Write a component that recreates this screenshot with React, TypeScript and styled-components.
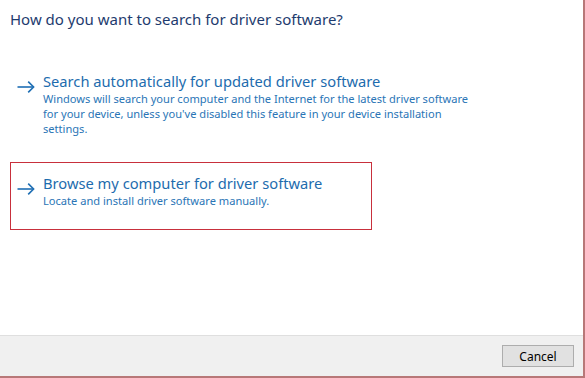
import styled, { createGlobalStyle } from 'styled-components'

const GlobalStyle = createGlobalStyle`
  html, body {
    margin: 0;
    padding: 0;
    background: #ffffff;
  }
  body {
    font-family: "Noto Sans", "Open Sans", sans-serif;
  }
`

const Window = styled.div`
  box-sizing: border-box;
  width: 585px;
  height: 378px;
  display: flex;
  flex-direction: column;
  background: #ffffff;
  border-right: 2px solid #b87878;
  border-bottom: 2px solid #b87878;
`

const Content = styled.div`
  flex: 1;
  padding: 8px 0 0 10px;
`

const Title = styled.h1`
  margin: 0 0 40px 0;
  font-size: 15px;
  font-weight: 400;
  line-height: 22px;
  color: #1e3b6e;
`

const LinkBox = styled.div<{ $highlighted?: boolean }>`
  box-sizing: border-box;
  width: ${(p) => (p.$highlighted ? '362px' : '466px')};
  display: grid;
  grid-template-columns: 26px 1fr;
  padding: ${(p) => (p.$highlighted ? '10px 0 21px 6px' : '0 0 0 6px')};
  margin-bottom: 25px;
  border: 1px solid ${(p) => (p.$highlighted ? '#c8303c' : 'transparent')};
  cursor: pointer;
`

const ArrowCell = styled.div`
  padding-top: 5px;
  color: #1f6fb4;
`

const LinkTitle = styled.div`
  font-size: 14.7px;
  line-height: 20px;
  color: #1d6cae;
`

const LinkNote = styled.div`
  font-size: 11.1px;
  line-height: 15px;
  color: #2a75b6;
`

const Footer = styled.div`
  height: 40px;
  display: flex;
  align-items: center;
  justify-content: flex-end;
  padding-right: 9px;
  background: #f0f0f0;
  border-top: 1px solid #dfdfdf;
`

const Button = styled.button`
  width: 72px;
  height: 22px;
  padding: 0;
  font-family: inherit;
  font-size: 12px;
  color: #000000;
  background: #e1e1e1;
  border: 1px solid #adadad;
`

function Arrow() {
  return (
    <svg width="18" height="12" viewBox="0 0 18 12" fill="none">
      <path d="M0.5 6 H16.6" stroke="currentColor" strokeWidth="1.6" />
      <path d="M11.2 0.6 L16.6 6 L11.2 11.4" stroke="currentColor" strokeWidth="1.6" />
    </svg>
  )
}

interface CommandLinkProps {
  title: string
  note: string
  highlighted?: boolean
}

function CommandLink({ title, note, highlighted }: CommandLinkProps) {
  return (
    <LinkBox $highlighted={highlighted}>
      <ArrowCell>
        <Arrow />
      </ArrowCell>
      <div>
        <LinkTitle>{title}</LinkTitle>
        <LinkNote>{note}</LinkNote>
      </div>
    </LinkBox>
  )
}

export default function App() {
  return (
    <>
      <GlobalStyle />
      <Window>
        <Content>
          <Title>How do you want to search for driver software?</Title>
          <CommandLink
            title="Search automatically for updated driver software"
            note="Windows will search your computer and the Internet for the latest driver software for your device, unless you've disabled this feature in your device installation settings."
          />
          <CommandLink
            highlighted
            title="Browse my computer for driver software"
            note="Locate and install driver software manually."
          />
        </Content>
        <Footer>
          <Button>Cancel</Button>
        </Footer>
      </Window>
    </>
  )
}
